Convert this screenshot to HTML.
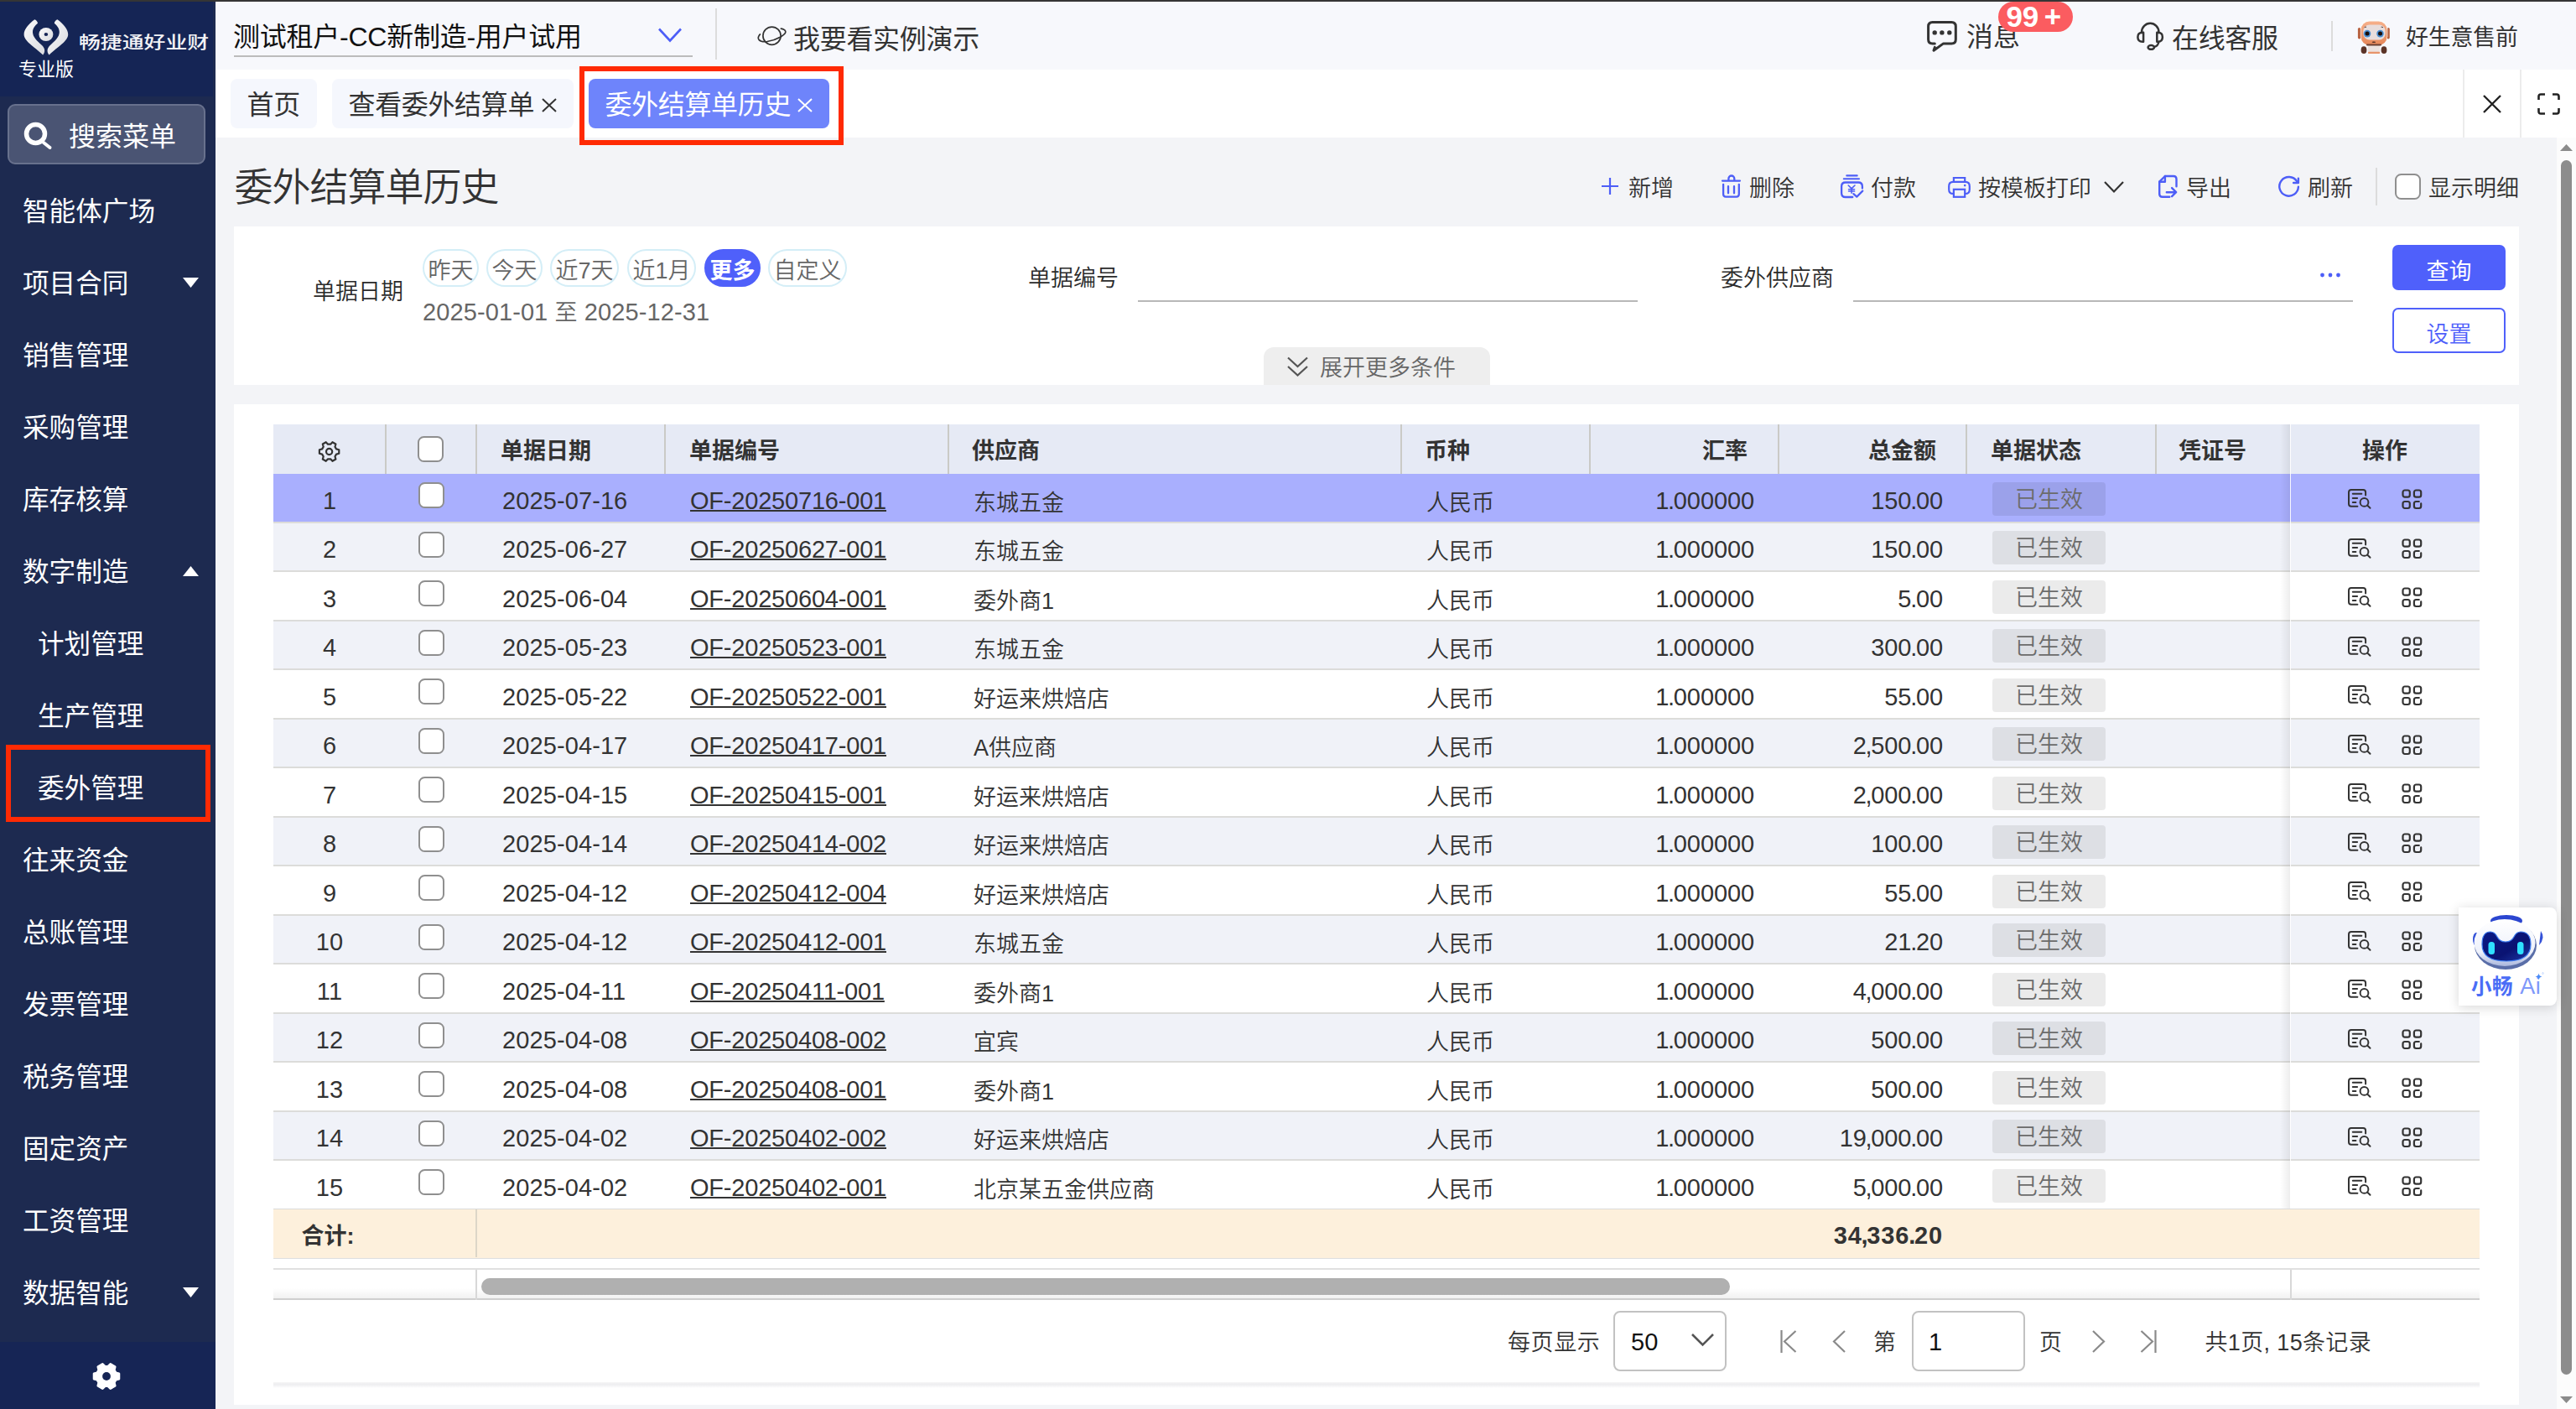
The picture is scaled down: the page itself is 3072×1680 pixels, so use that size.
<!DOCTYPE html>
<html lang="zh-CN"><head><meta charset="utf-8"><title>委外结算单历史</title><style>
*{box-sizing:border-box;margin:0;padding:0}
html,body{width:3072px;height:1680px;overflow:hidden}
body{position:relative;background:#f3f4f7;font-family:"Liberation Sans","Noto Sans CJK SC",sans-serif;color:#333;font-weight:350}
.a{position:absolute;white-space:nowrap}
.t{position:absolute;white-space:nowrap;line-height:1}
svg{position:absolute;overflow:visible}
.side{left:0;top:2px;width:257px;height:1678px;background:#1d2a50}
.mi{left:27px;color:#fff;font-weight:400;font-size:31.6px;height:40px;line-height:40px}
.mi.sub{left:45px}
.tb{font-size:27px;color:#333;height:36px;line-height:36px}
.hd{font-size:27px;font-weight:bold;color:#333;height:59px;line-height:59px;top:509px}
.row{left:326px;width:2631px;height:57px}
.c{font-size:27px;color:#333;height:57px;line-height:57px;top:6.5px}
.num{letter-spacing:.1px}
.c.num{font-size:29px;top:3.5px}
.p{margin-left:-1.2px;letter-spacing:-1.3px}
.cb{width:31px;height:31px;border:2px solid #8f8f8f;border-radius:7.500px;background:#fff}
.st{left:2050px;top:9.5px;width:135px;height:40px;line-height:42px;text-align:center;font-size:27px;color:#6b6b6b;background:rgba(0,0,0,.08);border-radius:4px}
.pill{top:297px;height:45px;line-height:49.500px;border:2px solid #d4eef7;border-radius:23px;font-size:27px;color:#666;text-align:center}
</style></head><body>
<div class="a" style="left:0;top:0;width:3072px;height:2px;background:#353535"></div>
<div class="a side"></div>
<div class="a" style="left:0;top:2px;width:254px;height:113px;background:#152555"></div>
<div class="a" style="left:0;top:1600px;width:257px;height:80px;background:#162555"></div>
<svg style="left:28px;top:22px" width="54" height="45" viewBox="0 0 54 45">
<defs><linearGradient id="lg" x1="0" y1="0" x2="1" y2="1"><stop offset="0" stop-color="#fbfbfc"/><stop offset="1" stop-color="#d9dade"/></linearGradient></defs>
<path d="M13.3 1.2 C6 6.5 0.6 13 0.6 19 C0.6 27 12 33 23.2 43.4 C26.5 39.5 25.5 35.5 22 32 C16 26.5 11 22 11 16.2 C11 12 14 8 17 5.8 C17 4 15.5 2 13.3 1.2 Z" fill="url(#lg)"/><path d="M40.5 1.2 C47.8 6.5 53.2 13.0 53.2 19.0 C53.2 27.0 41.8 33.0 30.6 43.4 C27.3 39.5 28.3 35.5 31.8 32.0 C37.8 26.5 42.8 22.0 42.8 16.2 C42.8 12.0 39.8 8.0 36.8 5.8 C36.8 4.0 38.3 2.0 40.5 1.2 Z" fill="url(#lg)"/>
<ellipse cx="26.900" cy="19" rx="8.500" ry="8" fill="url(#lg)"/><ellipse cx="26.900" cy="19" rx="2.300" ry="1.900" fill="#162555"/>
</svg>
<div class="t" style="left:94px;top:40.500px;font-size:20.500px;font-weight:500;color:#f3f3f6;transform:scaleX(1.262);transform-origin:0 0">畅捷通好业财</div>
<div class="t" style="left:22px;top:71.5px;font-size:22px;font-weight:400;color:#fff">专业版</div>
<div class="a" style="left:9px;top:124px;width:236px;height:72px;background:#4a5473;border:2px solid #68718d;border-radius:9px"></div>
<svg style="left:26px;top:143px" width="40" height="40" viewBox="0 0 40 40"><circle cx="16.5" cy="16.5" r="11" fill="none" stroke="#fff" stroke-width="5.5"/><path d="M26 27 L33.5 33" stroke="#fff" stroke-width="4" stroke-linecap="round"/></svg>
<div class="t" style="left:82px;top:147px;font-size:32px;font-weight:400;color:#fff">搜索菜单</div>
<div class="a mi" style="top:232px">智能体广场</div>
<div class="a mi" style="top:318px">项目合同</div>
<svg style="left:218px;top:331px" width="19" height="12" viewBox="0 0 19 12"><path d="M0 0H19L9.500 12Z" fill="#fff"/></svg>
<div class="a mi" style="top:404px">销售管理</div>
<div class="a mi" style="top:490px">采购管理</div>
<div class="a mi" style="top:576px">库存核算</div>
<div class="a mi" style="top:662px">数字制造</div>
<svg style="left:218px;top:675px" width="19" height="12" viewBox="0 0 19 12"><path d="M0 12H19L9.500 0Z" fill="#fff"/></svg>
<div class="a mi sub" style="top:748px">计划管理</div>
<div class="a mi sub" style="top:834px">生产管理</div>
<div class="a mi sub" style="top:920px">委外管理</div>
<div class="a mi" style="top:1006px">往来资金</div>
<div class="a mi" style="top:1092px">总账管理</div>
<div class="a mi" style="top:1178px">发票管理</div>
<div class="a mi" style="top:1264px">税务管理</div>
<div class="a mi" style="top:1350px">固定资产</div>
<div class="a mi" style="top:1436px">工资管理</div>
<div class="a mi" style="top:1522px">数据智能</div>
<svg style="left:218px;top:1535px" width="19" height="12" viewBox="0 0 19 12"><path d="M0 0H19L9.500 12Z" fill="#fff"/></svg>
<div class="a" style="left:7px;top:888px;width:244px;height:92px;border:6px solid #ff2a04"></div>
<svg style="left:107px;top:1620.700px" width="40" height="40" viewBox="0 0 40 40"><path d="M31.02 15.77 L34.87 16.84 L34.87 23.16 L31.02 24.23 L29.17 27.43 L30.17 31.30 L24.70 34.46 L21.85 31.65 L18.15 31.65 L15.30 34.46 L9.83 31.30 L10.83 27.43 L8.98 24.23 L5.13 23.16 L5.13 16.84 L8.98 15.77 L10.83 12.57 L9.83 8.70 L15.30 5.54 L18.15 8.35 L21.85 8.35 L24.70 5.54 L30.17 8.70 L29.17 12.57Z" fill="#fff" stroke="#fff" stroke-width="2.800" stroke-linejoin="round"/><circle cx="20" cy="20" r="4.900" fill="#162555"/></svg>
<div class="a" style="left:257px;top:2px;width:2815px;height:81px;background:#f7f8fc"></div>
<div class="t" style="left:278px;top:28px;font-size:32px;font-weight:400;color:#111;letter-spacing:-.25px">测试租户-CC新制造-用户试用</div>
<div class="a" style="left:279px;top:66px;width:547px;height:2px;background:#bcbcbc"></div>
<svg style="left:785px;top:33px" width="28" height="18" viewBox="0 0 28 18"><path d="M1 1.5L14 15.5L27 1.5" fill="none" stroke="#4d5ef7" stroke-width="2.6"/></svg>
<div class="a" style="left:853px;top:10px;width:2px;height:61px;background:#dcdcdc"></div>
<svg style="left:902px;top:28px" width="38" height="30" viewBox="0 0 38 30"><circle cx="18.500" cy="14.700" r="10.600" fill="none" stroke="#333" stroke-width="1.700"/><path d="M4.400 12.800Q1 16.500 3 19.300Q6 22.500 13 21.500Q22 20 29 16Q35.500 12 34.800 9.500Q34 6.800 29.400 6.100" fill="none" stroke="#333" stroke-width="1.700" stroke-linecap="round"/></svg>
<div class="t" style="left:946px;top:31px;font-size:32px;font-weight:400;color:#333;letter-spacing:-.3px">我要看实例演示</div>
<svg style="left:2297px;top:25px" width="38" height="37" viewBox="0 0 38 37"><path d="M10.300 26.900H7.600Q2.600 26.900 2.600 21.900V6.400Q2.600 1.400 7.600 1.400H30.300Q35.300 1.400 35.300 6.400V21.900Q35.300 26.900 30.300 26.900H20.600L9 35.200L10.300 31.400" fill="none" stroke="#333" stroke-width="3" stroke-linejoin="round" stroke-linecap="round"/><circle cx="10.200" cy="13.900" r="2.700" fill="#333"/><circle cx="18.900" cy="13.900" r="2.700" fill="#333"/><circle cx="27.800" cy="13.900" r="2.700" fill="#333"/></svg>
<div class="t" style="left:2345px;top:28.300px;font-size:32px;font-weight:400;color:#333;letter-spacing:-.1px">消息</div>
<div class="a" style="left:2383px;top:2px;width:89px;height:36px;border-radius:18px;background:#fb5c60"></div>
<div class="t" style="left:2392.500px;top:2.200px;font-size:35px;font-weight:bold;color:#fff;letter-spacing:-.3px;word-spacing:-2.500px">99 +</div>
<svg style="left:2547px;top:26px" width="34" height="36" viewBox="0 0 34 36"><g fill="none" stroke="#333" stroke-width="2.500" stroke-linejoin="round"><path d="M7.100 13.500V12A10.150 10.150 0 0 1 27.400 12V13.500"/><path d="M9.100 12.800V23.700H8C3.500 23.700 2.400 20.500 2.400 18.250C2.400 16 3.500 12.800 8 12.800Z"/><path d="M25.300 12.800V23.700H26.400C30.900 23.700 31.900 20.500 31.900 18.250C31.900 16 30.900 12.800 26.400 12.800Z"/><path d="M27.400 23.500C27 27.500 24.500 29.500 21.600 30"/><ellipse cx="18.300" cy="30.400" rx="3.700" ry="2.400"/></g></svg>
<div class="t" style="left:2590px;top:30px;font-size:32px;font-weight:400;color:#333;letter-spacing:-.35px">在线客服</div>
<div class="a" style="left:2780px;top:25px;width:2px;height:36px;background:#dcdcdc"></div>
<svg style="left:2811px;top:22px" width="39" height="44" viewBox="0 0 39 44">
<defs><linearGradient id="ag" x1="0" y1="0" x2="0" y2="1"><stop offset="0" stop-color="#f6b08a"/><stop offset="1" stop-color="#e58658"/></linearGradient></defs>
<ellipse cx="8" cy="37.700" rx="3.400" ry="4.400" fill="#5b3327"/><ellipse cx="32" cy="37.700" rx="3.400" ry="4.400" fill="#5b3327"/>
<rect x="12.900" y="31" width="14.400" height="11" rx="3" fill="#ece2df"/><rect x="12.900" y="39.800" width="14.400" height="2.300" rx="1.100" fill="#e8946a"/>
<rect x="0.900" y="10.900" width="3.400" height="13.600" rx="1.700" fill="#b7613f"/><rect x="35.400" y="10.900" width="3.400" height="13.600" rx="1.700" fill="#b7613f"/>
<rect x="3.900" y="0.700" width="32.400" height="30.600" rx="10" fill="#fbfbfb"/>
<rect x="4.600" y="3.600" width="31" height="28.400" rx="10" fill="url(#ag)"/>
<rect x="11" y="30.500" width="18" height="2" rx="1" fill="#6b3f31"/>
<rect x="7.300" y="7.500" width="26.400" height="18" rx="7.500" fill="#e7dddc"/>
<circle cx="12" cy="18.100" r="4.300" fill="#4a8ed2"/><circle cx="27.500" cy="18.100" r="4.300" fill="#4a8ed2"/>
<circle cx="12" cy="18.100" r="2.500" fill="#190d0a"/><circle cx="27.500" cy="18.100" r="2.500" fill="#190d0a"/>
<path d="M8.600 10.800Q9.800 9.800 11 10.300M28.600 10.300Q29.800 9.800 31 10.800" fill="none" stroke="#3a2a28" stroke-width=".9"/>
<ellipse cx="19.900" cy="28.200" rx="2.300" ry=".8" fill="#4a2a22"/>
</svg>
<div class="t" style="left:2869px;top:31.500px;font-size:27px;font-weight:400;color:#333;letter-spacing:-.25px">好生意售前</div>
<div class="a" style="left:257px;top:83px;width:2815px;height:81px;background:#fff"></div>
<div class="a" style="left:275px;top:94px;width:103px;height:59px;background:#f5f7fd;border-radius:8px"></div>
<div class="t" style="left:294.500px;top:109px;font-size:32px;font-weight:400;color:#333;letter-spacing:-.3px">首页</div>
<div class="a" style="left:396px;top:94px;width:288px;height:59px;background:#f5f7fd;border-radius:8px"></div>
<div class="t" style="left:415.500px;top:109px;font-size:32px;font-weight:400;color:#333;letter-spacing:-.35px">查看委外结算单</div>
<svg style="left:646px;top:117px" width="18" height="17" viewBox="0 0 18 17"><path d="M1 1L17 16M17 1L1 16" stroke="#333" stroke-width="2"/></svg>
<div class="a" style="left:702px;top:94px;width:287px;height:59px;background:#6e84fb;border-radius:8px"></div>
<div class="t" style="left:721.500px;top:109px;font-size:32px;font-weight:400;color:#fff;letter-spacing:-.35px">委外结算单历史</div>
<svg style="left:951px;top:117px" width="18" height="17" viewBox="0 0 18 17"><path d="M1 1L17 16M17 1L1 16" stroke="#fff" stroke-width="2"/></svg>
<div class="a" style="left:691px;top:79px;width:315px;height:94px;border:6px solid #ff2a04"></div>
<div class="a" style="left:2937px;top:83px;width:2px;height:81px;background:#ececec"></div>
<div class="a" style="left:3005px;top:83px;width:2px;height:81px;background:#ececec"></div>
<svg style="left:2961px;top:113px" width="22" height="22" viewBox="0 0 22 22"><path d="M1 1L21 21M21 1L1 21" stroke="#222" stroke-width="2.400"/></svg>
<svg style="left:3026px;top:111px" width="27" height="26" viewBox="0 0 27 26"><path d="M1.500 8V4Q1.500 1.500 4 1.500H9M18 1.500H23Q25.500 1.500 25.500 4V8M25.500 18V22Q25.500 24.500 23 24.500H18M9 24.500H4Q1.500 24.500 1.500 22V18" fill="none" stroke="#222" stroke-width="2.600"/></svg>
<div class="a" style="left:3049px;top:164px;width:23px;height:1516px;background:#fcfcfc"></div>
<div class="a" style="left:3054px;top:191px;width:13px;height:1448px;background:#8c8c8c;border-radius:6.500px"></div>
<svg style="left:3053px;top:172px" width="15" height="8" viewBox="0 0 15 8"><path d="M0 8H15L7.500 0Z" fill="#8b8b8b"/></svg>
<svg style="left:3053px;top:1665px" width="15" height="8" viewBox="0 0 15 8"><path d="M0 0H15L7.500 8Z" fill="#8b8b8b"/></svg>
<div class="t" style="left:279.500px;top:199.500px;font-size:46px;color:#333;letter-spacing:-1px">委外结算单历史</div>
<svg style="left:1910px;top:212px" width="20" height="20" viewBox="0 0 20 20"><path d="M10 0V20M0 10H20" stroke="#4d5ef7" stroke-width="2.200"/></svg>
<div class="a tb" style="left:1942px;top:207px">新增</div>
<svg style="left:2053px;top:208px" width="23" height="28" viewBox="0 0 23 28"><path d="M1 7.600H22M8.400 7.600V5A3.450 3.500 0 0 1 15.300 5V7.600M2.100 11.800V23.600Q2.100 26.600 5.100 26.600H17.800Q20.800 26.600 20.800 23.600V11.800M8 14.200V22.300M15 14.200V22.300" fill="none" stroke="#4d5ef7" stroke-width="2.300" stroke-linecap="round"/></svg>
<div class="a tb" style="left:2086px;top:207px">删除</div>
<svg style="left:2194px;top:208px" width="29" height="29" viewBox="0 0 29 29"><g fill="none" stroke="#4d5ef7" stroke-linecap="round" stroke-linejoin="round"><path d="M8.300 1.400H20.700M4.800 5.200H23" stroke-width="2.100"/><path d="M15.300 27H6.800Q2.100 27 2.100 22.300V14.200Q2.100 9.500 6.800 9.500H22.200Q26.900 9.500 26.900 14.200V16.500" stroke-width="2.300"/><path d="M10.200 13L14.100 16.900L18 13M14.100 16.900V22.300M10.600 17.700H17.600M10.600 20H17.600" stroke-width="1.600"/><path d="M16.400 23.100L20.300 26.600L27.300 19.600" stroke-width="2.200"/></g></svg>
<div class="a tb" style="left:2231px;top:207px">付款</div>
<svg style="left:2322px;top:210px" width="29" height="27" viewBox="0 0 29 27"><g fill="none" stroke="#4d5ef7" stroke-width="2.200"><path d="M7.900 6.500V2H21.200V6.500"/><path d="M7.900 20.900H7.200Q2.200 20.900 2.200 15.900V11.900Q2.200 6.900 7.200 6.900H21.800Q26.800 6.900 26.800 11.900V15.900Q26.800 20.900 21.800 20.900H21.200"/><rect x="7.900" y="15.800" width="13.300" height="9"/></g><circle cx="21.200" cy="11.100" r="1.300" fill="#4d5ef7"/></svg>
<div class="a tb" style="left:2359px;top:207px">按模板打印</div>
<svg style="left:2509px;top:216px" width="24" height="14" viewBox="0 0 24 14"><path d="M1 1L12 12.500L23 1" fill="none" stroke="#333" stroke-width="2.200"/></svg>
<svg style="left:2573px;top:208px" width="25" height="29" viewBox="0 0 25 29"><g fill="none" stroke="#4d5ef7" stroke-width="2.400" stroke-linecap="round" stroke-linejoin="round"><path d="M14.300 26.800H5.700Q2.200 26.800 2.200 23.300V8.700L8.900 2H19Q22.500 2 22.500 5.500V14.300"/><path d="M2.200 8.700H8.900V2"/><path d="M10.800 21.200H22.100M17.100 16.100L22.100 21.200L17.100 26.200"/></g></svg>
<div class="a tb" style="left:2607px;top:207px">导出</div>
<svg style="left:2716px;top:209px" width="27" height="27" viewBox="0 0 27 27"><g fill="none" stroke="#4d5ef7" stroke-width="2.400" stroke-linecap="round" stroke-linejoin="round"><path d="M23.100 7.200A11.300 11.300 0 1 0 24.900 13.800"/><path d="M24.900 3.600V9H19.100"/></g></svg>
<div class="a tb" style="left:2752px;top:207px">刷新</div>
<div class="a" style="left:2833px;top:200px;width:2px;height:45px;background:#dcdcdc"></div>
<div class="a cb" style="left:2856px;top:207px"></div>
<div class="a tb" style="left:2896px;top:207px">显示明细</div>
<div class="a" style="left:279px;top:270px;width:2725px;height:188.500px;background:#fff"></div>
<div class="a tb" style="left:373px;top:329.500px;color:#2b2b2b">单据日期</div>
<div class="a pill" style="left:504px;width:67px">昨天</div>
<div class="a pill" style="left:580px;width:67px">今天</div>
<div class="a pill" style="left:656px;width:82px">近7天</div>
<div class="a pill" style="left:748px;width:82px">近1月</div>
<div class="a pill" style="left:840px;width:67px;background:#4f60fa;border-color:#4f60fa;color:#fff;font-weight:bold">更多</div>
<div class="a pill" style="left:916px;width:94px">自定义</div>
<div class="a tb num" style="left:504px;top:354px;color:#666;font-size:29px">2025-01-01 <span style="font-size:27px">至</span> 2025-12-31</div>
<div class="a tb" style="left:1226px;top:313.500px;color:#2b2b2b">单据编号</div>
<div class="a" style="left:1357px;top:357.600px;width:596px;height:2px;background:#b8b8b8"></div>
<div class="a tb" style="left:2052px;top:313.500px;color:#2b2b2b">委外供应商</div>
<div class="a" style="left:2210px;top:357.600px;width:596px;height:2px;background:#b8b8b8"></div>
<svg style="left:2767px;top:325px" width="24" height="6" viewBox="0 0 24 6"><circle cx="2.500" cy="3" r="2.400" fill="#4d5ef7"/><circle cx="12" cy="3" r="2.400" fill="#4d5ef7"/><circle cx="21.500" cy="3" r="2.400" fill="#4d5ef7"/></svg>
<div class="a" style="left:2853px;top:292px;width:135px;height:54px;background:#4f60fb;border-radius:7px;color:#fff;font-weight:400;font-size:27px;line-height:64px;text-align:center">查询</div>
<div class="a" style="left:2853px;top:367px;width:135px;height:54px;background:#fff;border:2px solid #4f60fa;border-radius:7px;color:#4f60fa;font-size:27px;line-height:60px;text-align:center">设置</div>
<div class="a" style="left:1507px;top:414px;width:270px;height:44.500px;background:#eeeeee;border-radius:12px 12px 0 0"></div>
<svg style="left:1535px;top:425px" width="25" height="24" viewBox="0 0 25 24"><path d="M1 1.500L12.500 12L24 1.500M1 12L12.500 22.500L24 12" fill="none" stroke="#555" stroke-width="2.200"/></svg>
<div class="a tb" style="left:1574px;top:421px;color:#666">展开更多条件</div>
<div class="a" style="left:279px;top:482px;width:2725px;height:1193px;background:#fff"></div>
<div class="a" style="left:326px;top:506px;width:2631px;height:59px;background:#e6eaf5"></div>
<div class="a" style="left:459.2px;top:506px;width:1.600px;height:59px;background:#cacac6"></div>
<div class="a" style="left:567.2px;top:506px;width:1.600px;height:59px;background:#cacac6"></div>
<div class="a" style="left:792.2px;top:506px;width:1.600px;height:59px;background:#cacac6"></div>
<div class="a" style="left:1130.2px;top:506px;width:1.600px;height:59px;background:#cacac6"></div>
<div class="a" style="left:1670.2px;top:506px;width:1.600px;height:59px;background:#cacac6"></div>
<div class="a" style="left:1895.2px;top:506px;width:1.600px;height:59px;background:#cacac6"></div>
<div class="a" style="left:2120.2px;top:506px;width:1.600px;height:59px;background:#cacac6"></div>
<div class="a" style="left:2344.2px;top:506px;width:1.600px;height:59px;background:#cacac6"></div>
<div class="a" style="left:2570.2px;top:506px;width:1.600px;height:59px;background:#cacac6"></div>
<svg style="left:379px;top:525px" width="27" height="27" viewBox="0 0 27 27"><path d="M22.06 10.42 L25.28 11.23 L25.28 15.77 L22.06 16.58 L20.49 19.29 L21.41 22.48 L17.47 24.75 L15.16 22.36 L12.04 22.36 L9.73 24.75 L5.79 22.48 L6.71 19.29 L5.14 16.58 L1.92 15.77 L1.92 11.23 L5.14 10.42 L6.71 7.71 L5.79 4.52 L9.73 2.25 L12.04 4.64 L15.16 4.64 L17.47 2.25 L21.41 4.52 L20.49 7.71Z" fill="none" stroke="#333" stroke-width="2.200" stroke-linejoin="round"/><circle cx="13.600" cy="13.500" r="3.600" fill="none" stroke="#333" stroke-width="2.200"/></svg>
<div class="a cb" style="left:498px;top:520px"></div>
<div class="a hd" style="left:597px">单据日期</div>
<div class="a hd" style="left:822px">单据编号</div>
<div class="a hd" style="left:1159px">供应商</div>
<div class="a hd" style="left:1699px">币种</div>
<div class="a hd" style="right:988px">汇率</div>
<div class="a hd" style="right:763px">总金额</div>
<div class="a hd" style="left:2374px">单据状态</div>
<div class="a hd" style="left:2598px">凭证号</div>
<div class="a hd" style="left:2731px;width:226px;text-align:center">操作</div>
<div class="a row" style="top:565.00px;background:#a9affe;border-bottom:0">
<div class="a" style="left:0;top:56.700px;width:2631px;height:1.900px;background:#dcdcda"></div>
<div class="a c num" style="left:0;width:134px;text-align:center">1</div>
<div class="a cb" style="left:173px;top:10px"></div>
<div class="a c num" style="left:273px">2025-07-16</div>
<div class="a c num" style="left:497px;letter-spacing:-.2px;text-decoration:underline;text-decoration-thickness:2px;text-underline-offset:1px">OF-20250716-001</div>
<div class="a c" style="left:835px">东城五金</div>
<div class="a c" style="left:1375px">人民币</div>
<div class="a c num" style="right:865px;letter-spacing:-.1px">1<span class="p">.</span>000000</div>
<div class="a c num" style="right:640px;letter-spacing:-.1px">150<span class="p">.</span>00</div>
<div class="a st">已生效</div>
<svg style="left:2474px;top:18px" width="28" height="24" viewBox="0 0 28 24"><g fill="none" stroke="#333" stroke-width="2" stroke-linecap="round"><path d="M11.400 20.800H4Q1 20.800 1 17.800V4.100Q1 1.100 4 1.100H18.100Q21.100 1.100 21.100 4.100V7.400"/><path d="M5.800 5.700H16.300M5.800 11H11.100M5.800 16H9.400"/><circle cx="19.500" cy="15.900" r="4.900"/><path d="M23.100 19.500L26.500 22.700"/></g></svg><svg style="left:2538px;top:18px" width="25" height="25" viewBox="0 0 25 25"><g fill="none" stroke="#333" stroke-width="2.200" stroke-linecap="round"><rect x="1.500" y="1.500" width="8.300" height="8.100" rx="2.400"/><rect x="14.900" y="1.500" width="8.300" height="8.100" rx="2.400"/><rect x="1.500" y="15" width="8.300" height="8" rx="2.400"/><path d="M23.200 17.400V20.600Q23.200 23 20.800 23H17.300Q14.900 23 14.900 20.600V17.400Q14.900 15 17.300 15H20.800"/></g></svg>
</div>
<div class="a row" style="top:623.50px;background:#f0f2f8;border-bottom:0">
<div class="a" style="left:0;top:56.700px;width:2631px;height:1.900px;background:#dcdcda"></div>
<div class="a c num" style="left:0;width:134px;text-align:center">2</div>
<div class="a cb" style="left:173px;top:10px"></div>
<div class="a c num" style="left:273px">2025-06-27</div>
<div class="a c num" style="left:497px;letter-spacing:-.2px;text-decoration:underline;text-decoration-thickness:2px;text-underline-offset:1px">OF-20250627-001</div>
<div class="a c" style="left:835px">东城五金</div>
<div class="a c" style="left:1375px">人民币</div>
<div class="a c num" style="right:865px;letter-spacing:-.1px">1<span class="p">.</span>000000</div>
<div class="a c num" style="right:640px;letter-spacing:-.1px">150<span class="p">.</span>00</div>
<div class="a st">已生效</div>
<svg style="left:2474px;top:18px" width="28" height="24" viewBox="0 0 28 24"><g fill="none" stroke="#333" stroke-width="2" stroke-linecap="round"><path d="M11.400 20.800H4Q1 20.800 1 17.800V4.100Q1 1.100 4 1.100H18.100Q21.100 1.100 21.100 4.100V7.400"/><path d="M5.800 5.700H16.300M5.800 11H11.100M5.800 16H9.400"/><circle cx="19.500" cy="15.900" r="4.900"/><path d="M23.100 19.500L26.500 22.700"/></g></svg><svg style="left:2538px;top:18px" width="25" height="25" viewBox="0 0 25 25"><g fill="none" stroke="#333" stroke-width="2.200" stroke-linecap="round"><rect x="1.500" y="1.500" width="8.300" height="8.100" rx="2.400"/><rect x="14.900" y="1.500" width="8.300" height="8.100" rx="2.400"/><rect x="1.500" y="15" width="8.300" height="8" rx="2.400"/><path d="M23.200 17.400V20.600Q23.200 23 20.800 23H17.300Q14.900 23 14.900 20.600V17.400Q14.900 15 17.300 15H20.800"/></g></svg>
</div>
<div class="a row" style="top:682.00px;background:#fff;border-bottom:0">
<div class="a" style="left:0;top:56.700px;width:2631px;height:1.900px;background:#dcdcda"></div>
<div class="a c num" style="left:0;width:134px;text-align:center">3</div>
<div class="a cb" style="left:173px;top:10px"></div>
<div class="a c num" style="left:273px">2025-06-04</div>
<div class="a c num" style="left:497px;letter-spacing:-.2px;text-decoration:underline;text-decoration-thickness:2px;text-underline-offset:1px">OF-20250604-001</div>
<div class="a c" style="left:835px">委外商1</div>
<div class="a c" style="left:1375px">人民币</div>
<div class="a c num" style="right:865px;letter-spacing:-.1px">1<span class="p">.</span>000000</div>
<div class="a c num" style="right:640px;letter-spacing:-.1px">5<span class="p">.</span>00</div>
<div class="a st">已生效</div>
<svg style="left:2474px;top:18px" width="28" height="24" viewBox="0 0 28 24"><g fill="none" stroke="#333" stroke-width="2" stroke-linecap="round"><path d="M11.400 20.800H4Q1 20.800 1 17.800V4.100Q1 1.100 4 1.100H18.100Q21.100 1.100 21.100 4.100V7.400"/><path d="M5.800 5.700H16.300M5.800 11H11.100M5.800 16H9.400"/><circle cx="19.500" cy="15.900" r="4.900"/><path d="M23.100 19.500L26.500 22.700"/></g></svg><svg style="left:2538px;top:18px" width="25" height="25" viewBox="0 0 25 25"><g fill="none" stroke="#333" stroke-width="2.200" stroke-linecap="round"><rect x="1.500" y="1.500" width="8.300" height="8.100" rx="2.400"/><rect x="14.900" y="1.500" width="8.300" height="8.100" rx="2.400"/><rect x="1.500" y="15" width="8.300" height="8" rx="2.400"/><path d="M23.200 17.400V20.600Q23.200 23 20.800 23H17.300Q14.900 23 14.900 20.600V17.400Q14.900 15 17.300 15H20.800"/></g></svg>
</div>
<div class="a row" style="top:740.50px;background:#f0f2f8;border-bottom:0">
<div class="a" style="left:0;top:56.700px;width:2631px;height:1.900px;background:#dcdcda"></div>
<div class="a c num" style="left:0;width:134px;text-align:center">4</div>
<div class="a cb" style="left:173px;top:10px"></div>
<div class="a c num" style="left:273px">2025-05-23</div>
<div class="a c num" style="left:497px;letter-spacing:-.2px;text-decoration:underline;text-decoration-thickness:2px;text-underline-offset:1px">OF-20250523-001</div>
<div class="a c" style="left:835px">东城五金</div>
<div class="a c" style="left:1375px">人民币</div>
<div class="a c num" style="right:865px;letter-spacing:-.1px">1<span class="p">.</span>000000</div>
<div class="a c num" style="right:640px;letter-spacing:-.1px">300<span class="p">.</span>00</div>
<div class="a st">已生效</div>
<svg style="left:2474px;top:18px" width="28" height="24" viewBox="0 0 28 24"><g fill="none" stroke="#333" stroke-width="2" stroke-linecap="round"><path d="M11.400 20.800H4Q1 20.800 1 17.800V4.100Q1 1.100 4 1.100H18.100Q21.100 1.100 21.100 4.100V7.400"/><path d="M5.800 5.700H16.300M5.800 11H11.100M5.800 16H9.400"/><circle cx="19.500" cy="15.900" r="4.900"/><path d="M23.100 19.500L26.500 22.700"/></g></svg><svg style="left:2538px;top:18px" width="25" height="25" viewBox="0 0 25 25"><g fill="none" stroke="#333" stroke-width="2.200" stroke-linecap="round"><rect x="1.500" y="1.500" width="8.300" height="8.100" rx="2.400"/><rect x="14.900" y="1.500" width="8.300" height="8.100" rx="2.400"/><rect x="1.500" y="15" width="8.300" height="8" rx="2.400"/><path d="M23.200 17.400V20.600Q23.200 23 20.800 23H17.300Q14.900 23 14.900 20.600V17.400Q14.900 15 17.300 15H20.800"/></g></svg>
</div>
<div class="a row" style="top:799.00px;background:#fff;border-bottom:0">
<div class="a" style="left:0;top:56.700px;width:2631px;height:1.900px;background:#dcdcda"></div>
<div class="a c num" style="left:0;width:134px;text-align:center">5</div>
<div class="a cb" style="left:173px;top:10px"></div>
<div class="a c num" style="left:273px">2025-05-22</div>
<div class="a c num" style="left:497px;letter-spacing:-.2px;text-decoration:underline;text-decoration-thickness:2px;text-underline-offset:1px">OF-20250522-001</div>
<div class="a c" style="left:835px">好运来烘焙店</div>
<div class="a c" style="left:1375px">人民币</div>
<div class="a c num" style="right:865px;letter-spacing:-.1px">1<span class="p">.</span>000000</div>
<div class="a c num" style="right:640px;letter-spacing:-.1px">55<span class="p">.</span>00</div>
<div class="a st">已生效</div>
<svg style="left:2474px;top:18px" width="28" height="24" viewBox="0 0 28 24"><g fill="none" stroke="#333" stroke-width="2" stroke-linecap="round"><path d="M11.400 20.800H4Q1 20.800 1 17.800V4.100Q1 1.100 4 1.100H18.100Q21.100 1.100 21.100 4.100V7.400"/><path d="M5.800 5.700H16.300M5.800 11H11.100M5.800 16H9.400"/><circle cx="19.500" cy="15.900" r="4.900"/><path d="M23.100 19.500L26.500 22.700"/></g></svg><svg style="left:2538px;top:18px" width="25" height="25" viewBox="0 0 25 25"><g fill="none" stroke="#333" stroke-width="2.200" stroke-linecap="round"><rect x="1.500" y="1.500" width="8.300" height="8.100" rx="2.400"/><rect x="14.900" y="1.500" width="8.300" height="8.100" rx="2.400"/><rect x="1.500" y="15" width="8.300" height="8" rx="2.400"/><path d="M23.200 17.400V20.600Q23.200 23 20.800 23H17.300Q14.900 23 14.900 20.600V17.400Q14.900 15 17.300 15H20.800"/></g></svg>
</div>
<div class="a row" style="top:857.50px;background:#f0f2f8;border-bottom:0">
<div class="a" style="left:0;top:56.700px;width:2631px;height:1.900px;background:#dcdcda"></div>
<div class="a c num" style="left:0;width:134px;text-align:center">6</div>
<div class="a cb" style="left:173px;top:10px"></div>
<div class="a c num" style="left:273px">2025-04-17</div>
<div class="a c num" style="left:497px;letter-spacing:-.2px;text-decoration:underline;text-decoration-thickness:2px;text-underline-offset:1px">OF-20250417-001</div>
<div class="a c" style="left:835px">A供应商</div>
<div class="a c" style="left:1375px">人民币</div>
<div class="a c num" style="right:865px;letter-spacing:-.1px">1<span class="p">.</span>000000</div>
<div class="a c num" style="right:640px;letter-spacing:-.1px">2<span class="p">,</span>500<span class="p">.</span>00</div>
<div class="a st">已生效</div>
<svg style="left:2474px;top:18px" width="28" height="24" viewBox="0 0 28 24"><g fill="none" stroke="#333" stroke-width="2" stroke-linecap="round"><path d="M11.400 20.800H4Q1 20.800 1 17.800V4.100Q1 1.100 4 1.100H18.100Q21.100 1.100 21.100 4.100V7.400"/><path d="M5.800 5.700H16.300M5.800 11H11.100M5.800 16H9.400"/><circle cx="19.500" cy="15.900" r="4.900"/><path d="M23.100 19.500L26.500 22.700"/></g></svg><svg style="left:2538px;top:18px" width="25" height="25" viewBox="0 0 25 25"><g fill="none" stroke="#333" stroke-width="2.200" stroke-linecap="round"><rect x="1.500" y="1.500" width="8.300" height="8.100" rx="2.400"/><rect x="14.900" y="1.500" width="8.300" height="8.100" rx="2.400"/><rect x="1.500" y="15" width="8.300" height="8" rx="2.400"/><path d="M23.200 17.400V20.600Q23.200 23 20.800 23H17.300Q14.900 23 14.900 20.600V17.400Q14.900 15 17.300 15H20.800"/></g></svg>
</div>
<div class="a row" style="top:916.00px;background:#fff;border-bottom:0">
<div class="a" style="left:0;top:56.700px;width:2631px;height:1.900px;background:#dcdcda"></div>
<div class="a c num" style="left:0;width:134px;text-align:center">7</div>
<div class="a cb" style="left:173px;top:10px"></div>
<div class="a c num" style="left:273px">2025-04-15</div>
<div class="a c num" style="left:497px;letter-spacing:-.2px;text-decoration:underline;text-decoration-thickness:2px;text-underline-offset:1px">OF-20250415-001</div>
<div class="a c" style="left:835px">好运来烘焙店</div>
<div class="a c" style="left:1375px">人民币</div>
<div class="a c num" style="right:865px;letter-spacing:-.1px">1<span class="p">.</span>000000</div>
<div class="a c num" style="right:640px;letter-spacing:-.1px">2<span class="p">,</span>000<span class="p">.</span>00</div>
<div class="a st">已生效</div>
<svg style="left:2474px;top:18px" width="28" height="24" viewBox="0 0 28 24"><g fill="none" stroke="#333" stroke-width="2" stroke-linecap="round"><path d="M11.400 20.800H4Q1 20.800 1 17.800V4.100Q1 1.100 4 1.100H18.100Q21.100 1.100 21.100 4.100V7.400"/><path d="M5.800 5.700H16.300M5.800 11H11.100M5.800 16H9.400"/><circle cx="19.500" cy="15.900" r="4.900"/><path d="M23.100 19.500L26.500 22.700"/></g></svg><svg style="left:2538px;top:18px" width="25" height="25" viewBox="0 0 25 25"><g fill="none" stroke="#333" stroke-width="2.200" stroke-linecap="round"><rect x="1.500" y="1.500" width="8.300" height="8.100" rx="2.400"/><rect x="14.900" y="1.500" width="8.300" height="8.100" rx="2.400"/><rect x="1.500" y="15" width="8.300" height="8" rx="2.400"/><path d="M23.200 17.400V20.600Q23.200 23 20.800 23H17.300Q14.900 23 14.900 20.600V17.400Q14.900 15 17.300 15H20.800"/></g></svg>
</div>
<div class="a row" style="top:974.50px;background:#f0f2f8;border-bottom:0">
<div class="a" style="left:0;top:56.700px;width:2631px;height:1.900px;background:#dcdcda"></div>
<div class="a c num" style="left:0;width:134px;text-align:center">8</div>
<div class="a cb" style="left:173px;top:10px"></div>
<div class="a c num" style="left:273px">2025-04-14</div>
<div class="a c num" style="left:497px;letter-spacing:-.2px;text-decoration:underline;text-decoration-thickness:2px;text-underline-offset:1px">OF-20250414-002</div>
<div class="a c" style="left:835px">好运来烘焙店</div>
<div class="a c" style="left:1375px">人民币</div>
<div class="a c num" style="right:865px;letter-spacing:-.1px">1<span class="p">.</span>000000</div>
<div class="a c num" style="right:640px;letter-spacing:-.1px">100<span class="p">.</span>00</div>
<div class="a st">已生效</div>
<svg style="left:2474px;top:18px" width="28" height="24" viewBox="0 0 28 24"><g fill="none" stroke="#333" stroke-width="2" stroke-linecap="round"><path d="M11.400 20.800H4Q1 20.800 1 17.800V4.100Q1 1.100 4 1.100H18.100Q21.100 1.100 21.100 4.100V7.400"/><path d="M5.800 5.700H16.300M5.800 11H11.100M5.800 16H9.400"/><circle cx="19.500" cy="15.900" r="4.900"/><path d="M23.100 19.500L26.500 22.700"/></g></svg><svg style="left:2538px;top:18px" width="25" height="25" viewBox="0 0 25 25"><g fill="none" stroke="#333" stroke-width="2.200" stroke-linecap="round"><rect x="1.500" y="1.500" width="8.300" height="8.100" rx="2.400"/><rect x="14.900" y="1.500" width="8.300" height="8.100" rx="2.400"/><rect x="1.500" y="15" width="8.300" height="8" rx="2.400"/><path d="M23.200 17.400V20.600Q23.200 23 20.800 23H17.300Q14.900 23 14.900 20.600V17.400Q14.900 15 17.300 15H20.800"/></g></svg>
</div>
<div class="a row" style="top:1033.00px;background:#fff;border-bottom:0">
<div class="a" style="left:0;top:56.700px;width:2631px;height:1.900px;background:#dcdcda"></div>
<div class="a c num" style="left:0;width:134px;text-align:center">9</div>
<div class="a cb" style="left:173px;top:10px"></div>
<div class="a c num" style="left:273px">2025-04-12</div>
<div class="a c num" style="left:497px;letter-spacing:-.2px;text-decoration:underline;text-decoration-thickness:2px;text-underline-offset:1px">OF-20250412-004</div>
<div class="a c" style="left:835px">好运来烘焙店</div>
<div class="a c" style="left:1375px">人民币</div>
<div class="a c num" style="right:865px;letter-spacing:-.1px">1<span class="p">.</span>000000</div>
<div class="a c num" style="right:640px;letter-spacing:-.1px">55<span class="p">.</span>00</div>
<div class="a st">已生效</div>
<svg style="left:2474px;top:18px" width="28" height="24" viewBox="0 0 28 24"><g fill="none" stroke="#333" stroke-width="2" stroke-linecap="round"><path d="M11.400 20.800H4Q1 20.800 1 17.800V4.100Q1 1.100 4 1.100H18.100Q21.100 1.100 21.100 4.100V7.400"/><path d="M5.800 5.700H16.300M5.800 11H11.100M5.800 16H9.400"/><circle cx="19.500" cy="15.900" r="4.900"/><path d="M23.100 19.500L26.500 22.700"/></g></svg><svg style="left:2538px;top:18px" width="25" height="25" viewBox="0 0 25 25"><g fill="none" stroke="#333" stroke-width="2.200" stroke-linecap="round"><rect x="1.500" y="1.500" width="8.300" height="8.100" rx="2.400"/><rect x="14.900" y="1.500" width="8.300" height="8.100" rx="2.400"/><rect x="1.500" y="15" width="8.300" height="8" rx="2.400"/><path d="M23.200 17.400V20.600Q23.200 23 20.800 23H17.300Q14.900 23 14.900 20.600V17.400Q14.900 15 17.300 15H20.800"/></g></svg>
</div>
<div class="a row" style="top:1091.50px;background:#f0f2f8;border-bottom:0">
<div class="a" style="left:0;top:56.700px;width:2631px;height:1.900px;background:#dcdcda"></div>
<div class="a c num" style="left:0;width:134px;text-align:center">10</div>
<div class="a cb" style="left:173px;top:10px"></div>
<div class="a c num" style="left:273px">2025-04-12</div>
<div class="a c num" style="left:497px;letter-spacing:-.2px;text-decoration:underline;text-decoration-thickness:2px;text-underline-offset:1px">OF-20250412-001</div>
<div class="a c" style="left:835px">东城五金</div>
<div class="a c" style="left:1375px">人民币</div>
<div class="a c num" style="right:865px;letter-spacing:-.1px">1<span class="p">.</span>000000</div>
<div class="a c num" style="right:640px;letter-spacing:-.1px">21<span class="p">.</span>20</div>
<div class="a st">已生效</div>
<svg style="left:2474px;top:18px" width="28" height="24" viewBox="0 0 28 24"><g fill="none" stroke="#333" stroke-width="2" stroke-linecap="round"><path d="M11.400 20.800H4Q1 20.800 1 17.800V4.100Q1 1.100 4 1.100H18.100Q21.100 1.100 21.100 4.100V7.400"/><path d="M5.800 5.700H16.300M5.800 11H11.100M5.800 16H9.400"/><circle cx="19.500" cy="15.900" r="4.900"/><path d="M23.100 19.500L26.500 22.700"/></g></svg><svg style="left:2538px;top:18px" width="25" height="25" viewBox="0 0 25 25"><g fill="none" stroke="#333" stroke-width="2.200" stroke-linecap="round"><rect x="1.500" y="1.500" width="8.300" height="8.100" rx="2.400"/><rect x="14.900" y="1.500" width="8.300" height="8.100" rx="2.400"/><rect x="1.500" y="15" width="8.300" height="8" rx="2.400"/><path d="M23.200 17.400V20.600Q23.200 23 20.800 23H17.300Q14.900 23 14.900 20.600V17.400Q14.900 15 17.300 15H20.800"/></g></svg>
</div>
<div class="a row" style="top:1150.00px;background:#fff;border-bottom:0">
<div class="a" style="left:0;top:56.700px;width:2631px;height:1.900px;background:#dcdcda"></div>
<div class="a c num" style="left:0;width:134px;text-align:center">11</div>
<div class="a cb" style="left:173px;top:10px"></div>
<div class="a c num" style="left:273px">2025-04-11</div>
<div class="a c num" style="left:497px;letter-spacing:-.2px;text-decoration:underline;text-decoration-thickness:2px;text-underline-offset:1px">OF-20250411-001</div>
<div class="a c" style="left:835px">委外商1</div>
<div class="a c" style="left:1375px">人民币</div>
<div class="a c num" style="right:865px;letter-spacing:-.1px">1<span class="p">.</span>000000</div>
<div class="a c num" style="right:640px;letter-spacing:-.1px">4<span class="p">,</span>000<span class="p">.</span>00</div>
<div class="a st">已生效</div>
<svg style="left:2474px;top:18px" width="28" height="24" viewBox="0 0 28 24"><g fill="none" stroke="#333" stroke-width="2" stroke-linecap="round"><path d="M11.400 20.800H4Q1 20.800 1 17.800V4.100Q1 1.100 4 1.100H18.100Q21.100 1.100 21.100 4.100V7.400"/><path d="M5.800 5.700H16.300M5.800 11H11.100M5.800 16H9.400"/><circle cx="19.500" cy="15.900" r="4.900"/><path d="M23.100 19.500L26.500 22.700"/></g></svg><svg style="left:2538px;top:18px" width="25" height="25" viewBox="0 0 25 25"><g fill="none" stroke="#333" stroke-width="2.200" stroke-linecap="round"><rect x="1.500" y="1.500" width="8.300" height="8.100" rx="2.400"/><rect x="14.900" y="1.500" width="8.300" height="8.100" rx="2.400"/><rect x="1.500" y="15" width="8.300" height="8" rx="2.400"/><path d="M23.200 17.400V20.600Q23.200 23 20.800 23H17.300Q14.900 23 14.900 20.600V17.400Q14.900 15 17.300 15H20.800"/></g></svg>
</div>
<div class="a row" style="top:1208.50px;background:#f0f2f8;border-bottom:0">
<div class="a" style="left:0;top:56.700px;width:2631px;height:1.900px;background:#dcdcda"></div>
<div class="a c num" style="left:0;width:134px;text-align:center">12</div>
<div class="a cb" style="left:173px;top:10px"></div>
<div class="a c num" style="left:273px">2025-04-08</div>
<div class="a c num" style="left:497px;letter-spacing:-.2px;text-decoration:underline;text-decoration-thickness:2px;text-underline-offset:1px">OF-20250408-002</div>
<div class="a c" style="left:835px">宜宾</div>
<div class="a c" style="left:1375px">人民币</div>
<div class="a c num" style="right:865px;letter-spacing:-.1px">1<span class="p">.</span>000000</div>
<div class="a c num" style="right:640px;letter-spacing:-.1px">500<span class="p">.</span>00</div>
<div class="a st">已生效</div>
<svg style="left:2474px;top:18px" width="28" height="24" viewBox="0 0 28 24"><g fill="none" stroke="#333" stroke-width="2" stroke-linecap="round"><path d="M11.400 20.800H4Q1 20.800 1 17.800V4.100Q1 1.100 4 1.100H18.100Q21.100 1.100 21.100 4.100V7.400"/><path d="M5.800 5.700H16.300M5.800 11H11.100M5.800 16H9.400"/><circle cx="19.500" cy="15.900" r="4.900"/><path d="M23.100 19.500L26.500 22.700"/></g></svg><svg style="left:2538px;top:18px" width="25" height="25" viewBox="0 0 25 25"><g fill="none" stroke="#333" stroke-width="2.200" stroke-linecap="round"><rect x="1.500" y="1.500" width="8.300" height="8.100" rx="2.400"/><rect x="14.900" y="1.500" width="8.300" height="8.100" rx="2.400"/><rect x="1.500" y="15" width="8.300" height="8" rx="2.400"/><path d="M23.200 17.400V20.600Q23.200 23 20.800 23H17.300Q14.900 23 14.900 20.600V17.400Q14.900 15 17.300 15H20.800"/></g></svg>
</div>
<div class="a row" style="top:1267.00px;background:#fff;border-bottom:0">
<div class="a" style="left:0;top:56.700px;width:2631px;height:1.900px;background:#dcdcda"></div>
<div class="a c num" style="left:0;width:134px;text-align:center">13</div>
<div class="a cb" style="left:173px;top:10px"></div>
<div class="a c num" style="left:273px">2025-04-08</div>
<div class="a c num" style="left:497px;letter-spacing:-.2px;text-decoration:underline;text-decoration-thickness:2px;text-underline-offset:1px">OF-20250408-001</div>
<div class="a c" style="left:835px">委外商1</div>
<div class="a c" style="left:1375px">人民币</div>
<div class="a c num" style="right:865px;letter-spacing:-.1px">1<span class="p">.</span>000000</div>
<div class="a c num" style="right:640px;letter-spacing:-.1px">500<span class="p">.</span>00</div>
<div class="a st">已生效</div>
<svg style="left:2474px;top:18px" width="28" height="24" viewBox="0 0 28 24"><g fill="none" stroke="#333" stroke-width="2" stroke-linecap="round"><path d="M11.400 20.800H4Q1 20.800 1 17.800V4.100Q1 1.100 4 1.100H18.100Q21.100 1.100 21.100 4.100V7.400"/><path d="M5.800 5.700H16.300M5.800 11H11.100M5.800 16H9.400"/><circle cx="19.500" cy="15.900" r="4.900"/><path d="M23.100 19.500L26.500 22.700"/></g></svg><svg style="left:2538px;top:18px" width="25" height="25" viewBox="0 0 25 25"><g fill="none" stroke="#333" stroke-width="2.200" stroke-linecap="round"><rect x="1.500" y="1.500" width="8.300" height="8.100" rx="2.400"/><rect x="14.900" y="1.500" width="8.300" height="8.100" rx="2.400"/><rect x="1.500" y="15" width="8.300" height="8" rx="2.400"/><path d="M23.200 17.400V20.600Q23.200 23 20.800 23H17.300Q14.900 23 14.900 20.600V17.400Q14.900 15 17.300 15H20.800"/></g></svg>
</div>
<div class="a row" style="top:1325.50px;background:#f0f2f8;border-bottom:0">
<div class="a" style="left:0;top:56.700px;width:2631px;height:1.900px;background:#dcdcda"></div>
<div class="a c num" style="left:0;width:134px;text-align:center">14</div>
<div class="a cb" style="left:173px;top:10px"></div>
<div class="a c num" style="left:273px">2025-04-02</div>
<div class="a c num" style="left:497px;letter-spacing:-.2px;text-decoration:underline;text-decoration-thickness:2px;text-underline-offset:1px">OF-20250402-002</div>
<div class="a c" style="left:835px">好运来烘焙店</div>
<div class="a c" style="left:1375px">人民币</div>
<div class="a c num" style="right:865px;letter-spacing:-.1px">1<span class="p">.</span>000000</div>
<div class="a c num" style="right:640px;letter-spacing:-.1px">19<span class="p">,</span>000<span class="p">.</span>00</div>
<div class="a st">已生效</div>
<svg style="left:2474px;top:18px" width="28" height="24" viewBox="0 0 28 24"><g fill="none" stroke="#333" stroke-width="2" stroke-linecap="round"><path d="M11.400 20.800H4Q1 20.800 1 17.800V4.100Q1 1.100 4 1.100H18.100Q21.100 1.100 21.100 4.100V7.400"/><path d="M5.800 5.700H16.300M5.800 11H11.100M5.800 16H9.400"/><circle cx="19.500" cy="15.900" r="4.900"/><path d="M23.100 19.500L26.500 22.700"/></g></svg><svg style="left:2538px;top:18px" width="25" height="25" viewBox="0 0 25 25"><g fill="none" stroke="#333" stroke-width="2.200" stroke-linecap="round"><rect x="1.500" y="1.500" width="8.300" height="8.100" rx="2.400"/><rect x="14.900" y="1.500" width="8.300" height="8.100" rx="2.400"/><rect x="1.500" y="15" width="8.300" height="8" rx="2.400"/><path d="M23.200 17.400V20.600Q23.200 23 20.800 23H17.300Q14.900 23 14.900 20.600V17.400Q14.900 15 17.300 15H20.800"/></g></svg>
</div>
<div class="a row" style="top:1384.00px;background:#fff;border-bottom:0">
<div class="a" style="left:0;top:56.700px;width:2631px;height:1.900px;background:#dcdcda"></div>
<div class="a c num" style="left:0;width:134px;text-align:center">15</div>
<div class="a cb" style="left:173px;top:10px"></div>
<div class="a c num" style="left:273px">2025-04-02</div>
<div class="a c num" style="left:497px;letter-spacing:-.2px;text-decoration:underline;text-decoration-thickness:2px;text-underline-offset:1px">OF-20250402-001</div>
<div class="a c" style="left:835px">北京某五金供应商</div>
<div class="a c" style="left:1375px">人民币</div>
<div class="a c num" style="right:865px;letter-spacing:-.1px">1<span class="p">.</span>000000</div>
<div class="a c num" style="right:640px;letter-spacing:-.1px">5<span class="p">,</span>000<span class="p">.</span>00</div>
<div class="a st">已生效</div>
<svg style="left:2474px;top:18px" width="28" height="24" viewBox="0 0 28 24"><g fill="none" stroke="#333" stroke-width="2" stroke-linecap="round"><path d="M11.400 20.800H4Q1 20.800 1 17.800V4.100Q1 1.100 4 1.100H18.100Q21.100 1.100 21.100 4.100V7.400"/><path d="M5.800 5.700H16.300M5.800 11H11.100M5.800 16H9.400"/><circle cx="19.500" cy="15.900" r="4.900"/><path d="M23.100 19.500L26.500 22.700"/></g></svg><svg style="left:2538px;top:18px" width="25" height="25" viewBox="0 0 25 25"><g fill="none" stroke="#333" stroke-width="2.200" stroke-linecap="round"><rect x="1.500" y="1.500" width="8.300" height="8.100" rx="2.400"/><rect x="14.900" y="1.500" width="8.300" height="8.100" rx="2.400"/><rect x="1.500" y="15" width="8.300" height="8" rx="2.400"/><path d="M23.200 17.400V20.600Q23.200 23 20.800 23H17.300Q14.900 23 14.900 20.600V17.400Q14.900 15 17.300 15H20.800"/></g></svg>
</div>
<div class="a" style="left:2719px;top:506px;width:12px;height:937px;background:linear-gradient(to right,rgba(0,0,0,0),rgba(0,0,0,.07))"></div>
<div class="a" style="left:2731px;top:506px;width:1.200px;height:995px;background:rgba(255,255,255,.9)"></div>
<div class="a" style="left:326px;top:1440.500px;width:2631px;height:60.500px;background:#fdf0dc;border-top:1.800px solid #dbdbdb;border-bottom:1.800px solid #dedede"></div>
<div class="a" style="left:567px;top:1442px;width:2px;height:57px;background:#ddd6c8"></div>
<div class="a c" style="left:359.500px;top:1446px;font-weight:bold">合计:</div>
<div class="a c num" style="right:755px;top:1444.500px;font-weight:bold;letter-spacing:.9px">34<span class="p">,</span>336<span class="p">.</span>20</div>
<div class="a" style="left:326px;top:1512px;width:2631px;height:38px;border-top:2px solid #e0e0e0;border-bottom:2px solid #cfcfcf;background:#fff"></div>
<div class="a" style="left:326px;top:1536px;width:2631px;height:12px;background:linear-gradient(rgba(0,0,0,0),rgba(0,0,0,.055))"></div>
<div class="a" style="left:567px;top:1514px;width:2px;height:36px;background:#d8d8d8"></div>
<div class="a" style="left:2731px;top:1514px;width:2px;height:36px;background:#d8d8d8"></div>
<div class="a" style="left:574px;top:1524px;width:1489px;height:20px;border-radius:10px;background:#b0b0b0"></div>
<div class="a" style="left:1798px;top:1580px;letter-spacing:.6px;font-size:27px;color:#333;height:40px;line-height:42px">每页显示</div>
<div class="a" style="left:1924px;top:1563px;width:135px;height:72px;border:2px solid #c2c2c2;border-radius:8px;background:#fff"></div>
<div class="a num" style="left:1945px;top:1579px;font-size:27px;color:#333;height:40px;line-height:42px;font-size:29px;color:#111">50</div>
<svg style="left:2016.500px;top:1590px" width="27" height="15" viewBox="0 0 27 15"><path d="M1 1L13.500 13.500L26 1" fill="none" stroke="#555" stroke-width="2.600"/></svg>
<svg style="left:2123px;top:1586px" width="20" height="27" viewBox="0 0 20 27"><path d="M1.500 0V27M18.500 1L5 13.500L18.500 26" fill="none" stroke="#8a8a8a" stroke-width="2.200"/></svg>
<svg style="left:2185px;top:1586px" width="16" height="27" viewBox="0 0 16 27"><path d="M15 1L2 13.500L15 26" fill="none" stroke="#8a8a8a" stroke-width="2.200"/></svg>
<div class="a" style="left:2234px;top:1580px;font-size:27px;color:#333;height:40px;line-height:42px">第</div>
<div class="a" style="left:2280px;top:1563px;width:135px;height:72px;border:2px solid #c2c2c2;border-radius:8px;background:#fff"></div>
<div class="a num" style="left:2300px;top:1579px;font-size:27px;color:#333;height:40px;line-height:42px;font-size:29px;color:#111">1</div>
<div class="a" style="left:2432px;top:1580px;font-size:27px;color:#333;height:40px;line-height:42px">页</div>
<svg style="left:2495px;top:1586px" width="16" height="27" viewBox="0 0 16 27"><path d="M1 1L14 13.500L1 26" fill="none" stroke="#8a8a8a" stroke-width="2.200"/></svg>
<svg style="left:2552px;top:1586px" width="20" height="27" viewBox="0 0 20 27"><path d="M18.500 0V27M1.500 1L15 13.500L1.500 26" fill="none" stroke="#8a8a8a" stroke-width="2.200"/></svg>
<div class="a" style="left:2629.500px;top:1580px;letter-spacing:.35px;font-size:27px;color:#333;height:40px;line-height:42px">共1页, 15条记录</div>
<div class="a" style="left:326px;top:1648px;width:2631px;height:7px;background:linear-gradient(#f6f6f7,#eeeef0 35%,#f3f3f5 60%,#fff)"></div>
<div class="a" style="left:2932px;top:1082px;width:117px;height:117px;background:#fff;border-radius:0 8px 8px 0;box-shadow:0 2px 14px rgba(0,0,0,.16)"></div>
<svg style="left:2948px;top:1090px" width="88" height="68" viewBox="0 0 88 68">
<defs><linearGradient id="hg" x1="0" y1="0" x2="0" y2="1"><stop offset="0" stop-color="#ffffff"/><stop offset=".7" stop-color="#eef1fb"/><stop offset="1" stop-color="#a9b6dc"/></linearGradient>
<linearGradient id="fg" x1="0" y1="0" x2="1" y2="1"><stop offset="0" stop-color="#0b1a86"/><stop offset=".6" stop-color="#0a1372"/><stop offset="1" stop-color="#1d3aa8"/></linearGradient></defs>
<ellipse cx="41" cy="8" rx="19" ry="7" fill="#2b46d0"/>
<ellipse cx="5" cy="30" rx="4" ry="8" fill="#3452d8"/><path d="M82 20Q88 28 80 37Z" fill="#3452d8"/>
<ellipse cx="40" cy="37" rx="37" ry="29" fill="#5a6ea8"/>
<ellipse cx="39" cy="34" rx="36.500" ry="28" fill="url(#hg)"/>
<path d="M22 21Q27 21 30 27Q33 33 40 33Q47 33 50 27Q53 21 58 21Q70 21 70 36Q70 56 41 56Q12 56 12 36Q12 21 22 21Z" fill="url(#fg)" stroke="#3c7cf0" stroke-width="1.200"/>
<rect x="19.500" y="33" width="7.500" height="15" rx="3.500" fill="#2fe0ff"/><rect x="54" y="33" width="7.500" height="15" rx="3.500" fill="#2fe0ff"/>
</svg>
<div class="t" style="left:2947px;top:1163px;font-size:24.500px;font-weight:bold;color:#4a6df6;letter-spacing:.5px">小畅 <span style="font-weight:normal;color:#7e97fa;font-size:27px;margin-left:1px">Ai</span></div>
<svg style="left:3023px;top:1159px" width="12" height="11" viewBox="0 0 12 11"><path d="M4.500 1.500Q5 5 8.500 5.500Q5 6 4.500 9.500Q4 6 0.500 5.500Q4 5 4.500 1.500Z" fill="#4a8cf7"/><path d="M9.500 0.300L10.300 1.500L9.500 2.700L8.700 1.500Z" fill="none" stroke="#8ab0fa" stroke-width=".5"/></svg>
</body></html>
